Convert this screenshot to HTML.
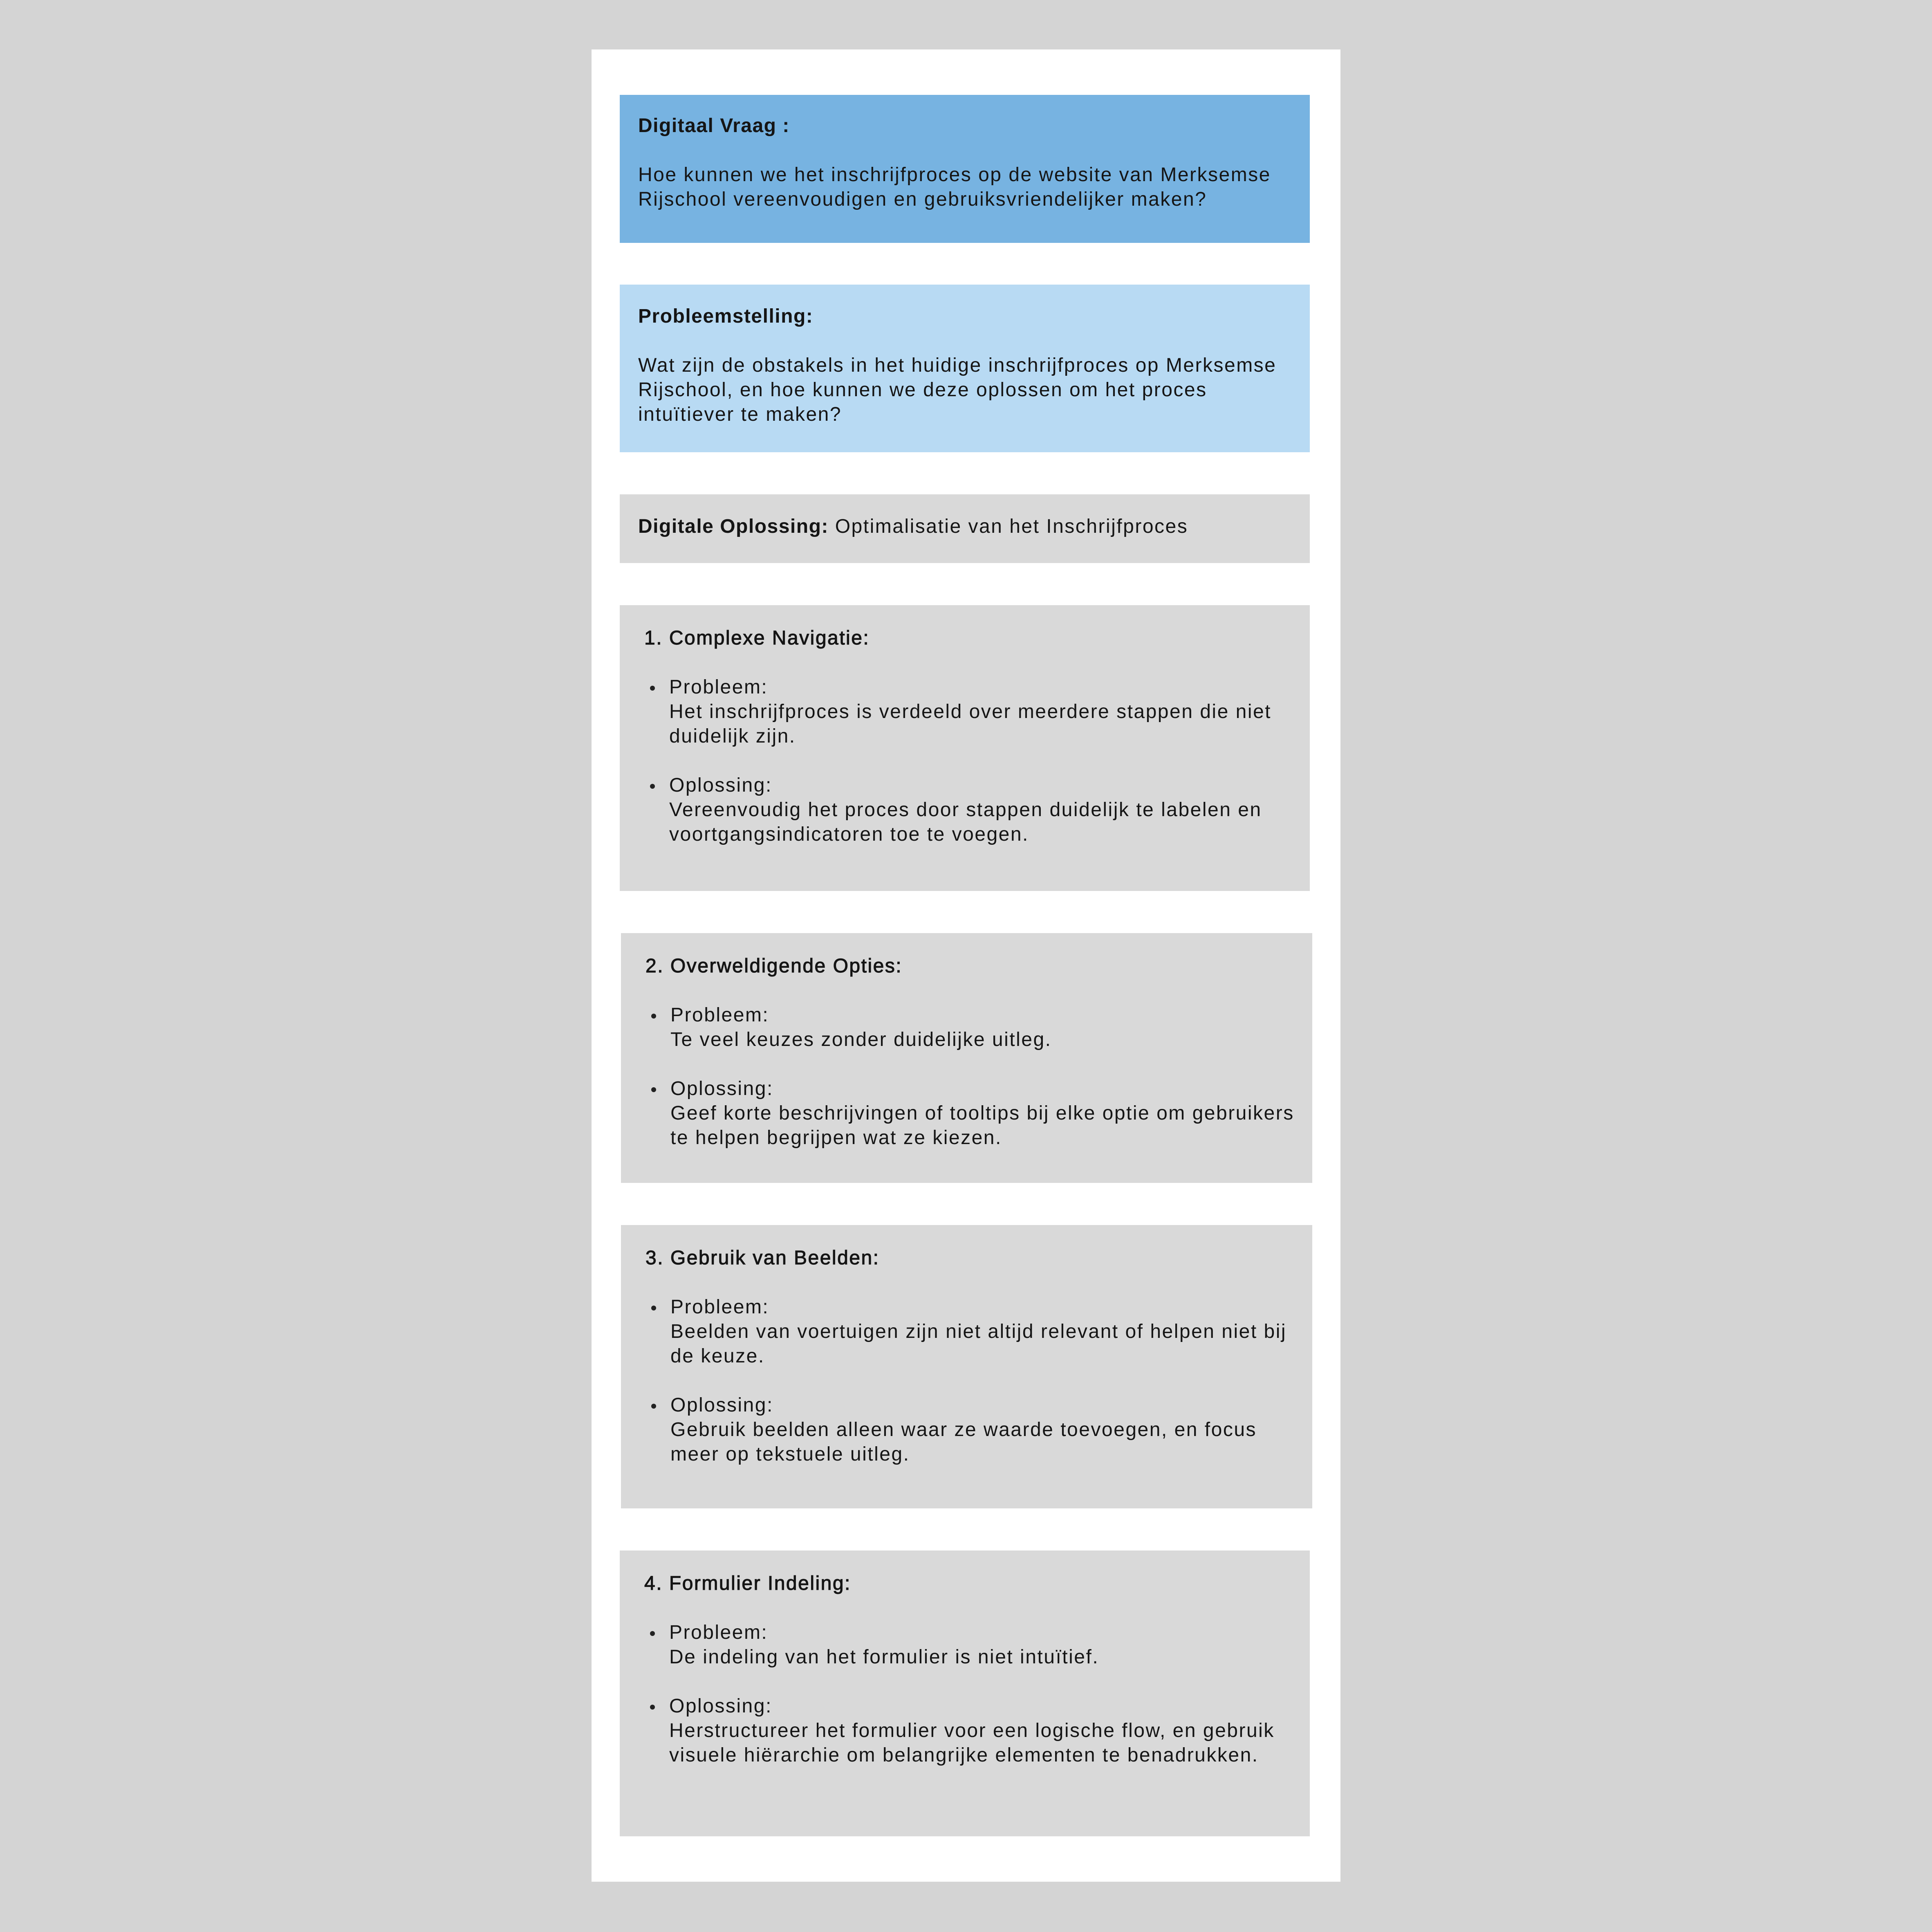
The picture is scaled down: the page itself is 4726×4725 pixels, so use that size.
<!DOCTYPE html>
<html><head><meta charset="utf-8"><style>
*{margin:0;padding:0;box-sizing:border-box}
body{width:4726px;height:4725px;background:#d4d4d4;position:relative;overflow:hidden;font-family:"Liberation Sans",sans-serif;color:#151515;font-size:48px;line-height:60px;letter-spacing:2.5px}
.panel{position:absolute;left:1447px;top:121px;width:1832px;height:4481px;background:#fff}
.box{position:absolute;white-space:nowrap}
.b{font-weight:bold;letter-spacing:1.5px}
.m{-webkit-text-stroke:1.2px #151515}
.gap{height:60px}
.li{position:relative;padding-left:61px}
.li:before{content:"";position:absolute;left:14px;top:26px;width:12px;height:12px;border-radius:50%;background:#222}
</style></head><body>
<div class="panel"></div>
<div class="box" style="left:1516px;top:232px;width:1688px;height:362px;background:#77b3e1;padding:46px 45px">
<div class="b">Digitaal Vraag :</div><div class="gap"></div>
<div>Hoe kunnen we het inschrijfproces op de website van Merksemse<br>Rijschool vereenvoudigen en gebruiksvriendelijker maken?</div></div>
<div class="box" style="left:1516px;top:696px;width:1688px;height:410px;background:#b8daf3;padding:48px 45px">
<div class="b">Probleemstelling:</div><div class="gap"></div>
<div>Wat zijn de obstakels in het huidige inschrijfproces op Merksemse<br>Rijschool, en hoe kunnen we deze oplossen om het proces<br>intuïtiever te maken?</div></div>
<div class="box" style="left:1516px;top:1209px;width:1688px;height:168px;background:#d9d9d9;padding:49px 45px">
<span class="b">Digitale Oplossing:</span> Optimalisatie van het Inschrijfproces</div>

<div class="box" style="left:1516px;top:1480px;width:1688px;height:699px;background:#d9d9d9;padding:51px 60px">
<div class="m">1. Complexe Navigatie:</div><div class="gap"></div>
<div class="li">Probleem:<br>Het inschrijfproces is verdeeld over meerdere stappen die niet<br>duidelijk zijn.</div><div class="gap"></div>
<div class="li">Oplossing:<br>Vereenvoudig het proces door stappen duidelijk te labelen en<br>voortgangsindicatoren toe te voegen.</div></div>

<div class="box" style="left:1519px;top:2282px;width:1691px;height:611px;background:#d9d9d9;padding:51px 60px">
<div class="m">2. Overweldigende Opties:</div><div class="gap"></div>
<div class="li">Probleem:<br>Te veel keuzes zonder duidelijke uitleg.</div><div class="gap"></div>
<div class="li">Oplossing:<br>Geef korte beschrijvingen of tooltips bij elke optie om gebruikers<br>te helpen begrijpen wat ze kiezen.</div></div>

<div class="box" style="left:1519px;top:2996px;width:1691px;height:693px;background:#d9d9d9;padding:51px 60px">
<div class="m">3. Gebruik van Beelden:</div><div class="gap"></div>
<div class="li">Probleem:<br>Beelden van voertuigen zijn niet altijd relevant of helpen niet bij<br>de keuze.</div><div class="gap"></div>
<div class="li">Oplossing:<br>Gebruik beelden alleen waar ze waarde toevoegen, en focus<br>meer op tekstuele uitleg.</div></div>

<div class="box" style="left:1516px;top:3792px;width:1688px;height:699px;background:#d9d9d9;padding:51px 60px">
<div class="m">4. Formulier Indeling:</div><div class="gap"></div>
<div class="li">Probleem:<br>De indeling van het formulier is niet intuïtief.</div><div class="gap"></div>
<div class="li">Oplossing:<br>Herstructureer het formulier voor een logische flow, en gebruik<br>visuele hiërarchie om belangrijke elementen te benadrukken.</div></div>
</body></html>
